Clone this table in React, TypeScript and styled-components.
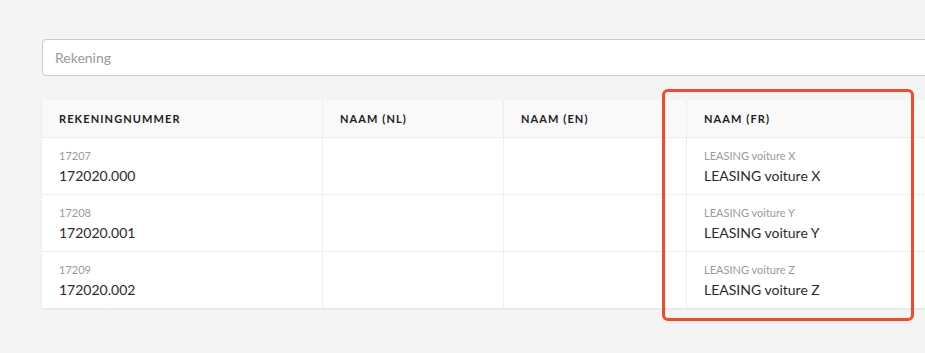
import React from 'react';
import styled, { createGlobalStyle } from 'styled-components';

const GlobalStyle = createGlobalStyle`
  html, body {
    margin: 0;
    padding: 0;
    background: #f4f4f4;
    font-family: Lato, "Open Sans", "Liberation Sans", sans-serif;
    overflow: hidden;
  }
`;

const Page = styled.div`
  position: relative;
  width: 1000px;
  padding: 39px 0 40px 42px;
  display: flex;
  flex-direction: column;
  gap: 24px;
`;

const SearchInput = styled.input`
  box-sizing: border-box;
  width: 100%;
  height: 37px;
  border: 1px solid #c9c9c9;
  border-radius: 4px;
  background: #fff;
  padding: 0 12px;
  font-family: inherit;
  font-size: 14px;
  color: #333;
  outline: none;

  &::placeholder {
    color: #9a9a9a;
  }
`;

const Table = styled.div`
  background: #fff;
  box-shadow: 0 1px 2px rgba(0, 0, 0, 0.08);
  display: grid;
  grid-template-columns: 280px 181px 183px 1fr;
`;

const HeadCell = styled.div`
  background: #f9f9f9;
  height: 37px;
  display: flex;
  align-items: center;
  padding: 0 17px;
  border-bottom: 1px solid #eeeeee;
  border-left: ${p => (p.$first ? 'none' : '1px solid #eeeeee')};
  font-size: 11px;
  font-weight: 700;
  letter-spacing: 1.1px;
  text-transform: uppercase;
  color: #222;
`;

const Cell = styled.div`
  padding: 11px 17px 9px;
  min-height: 36px;
  border-bottom: ${p => (p.$last ? 'none' : '1px solid #eeeeee')};
  border-left: ${p => (p.$first ? 'none' : '1px solid #eeeeee')};
  display: flex;
  flex-direction: column;
`;

const SubText = styled.span`
  font-size: 11px;
  line-height: 14px;
  color: #9a9a9a;
  margin-bottom: 3px;
`;

const MainText = styled.span`
  font-size: 14px;
  line-height: 19px;
  color: #2b2b2b;
`;

const Highlight = styled.div`
  position: absolute;
  left: 662px;
  top: 89px;
  width: 252px;
  height: 232px;
  box-sizing: border-box;
  border: 3px solid #f4492a;
  border-radius: 6px;
  pointer-events: none;
`;

const rows = [
  { code: '17207', number: '172020.000', fr: 'LEASING voiture X' },
  { code: '17208', number: '172020.001', fr: 'LEASING voiture Y' },
  { code: '17209', number: '172020.002', fr: 'LEASING voiture Z' },
];

const headers = ['Rekeningnummer', 'Naam (NL)', 'Naam (EN)', 'Naam (FR)'];

export default function App() {
  return (
    <>
      <GlobalStyle />
      <Page>
        <SearchInput placeholder="Rekening" />
        <Table>
          {headers.map((h, i) => (
            <HeadCell key={h} $first={i === 0}>{h}</HeadCell>
          ))}
          {rows.map((r, i) => {
            const last = i === rows.length - 1;
            return (
              <React.Fragment key={r.code}>
                <Cell $first $last={last}>
                  <SubText>{r.code}</SubText>
                  <MainText>{r.number}</MainText>
                </Cell>
                <Cell $last={last} />
                <Cell $last={last} />
                <Cell $last={last}>
                  <SubText>{r.fr}</SubText>
                  <MainText>{r.fr}</MainText>
                </Cell>
              </React.Fragment>
            );
          })}
        </Table>
        <Highlight />
      </Page>
    </>
  );
}
